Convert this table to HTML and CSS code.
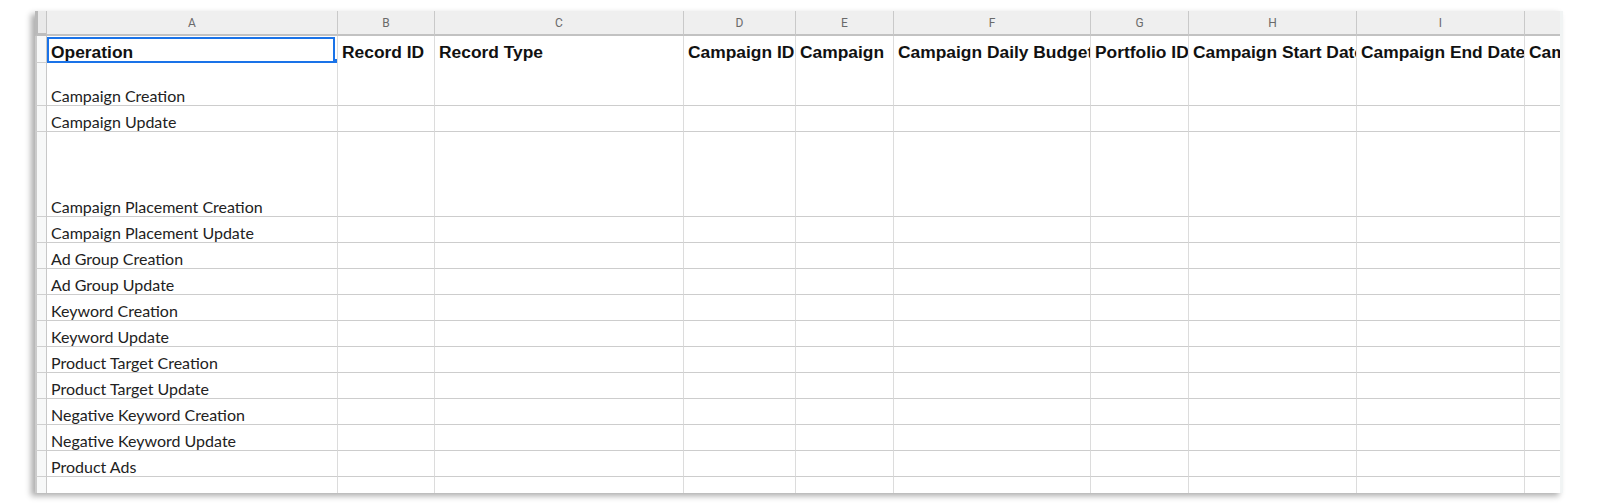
FILE: index.html
```html
<!DOCTYPE html>
<html>
<head>
<meta charset="utf-8">
<link rel="stylesheet" href="styles.css">
</head>
<body>
<div class="page">
  <div class="sheet">
    <div class="row r-head">
      <div class="corner"></div>
      <div class="colh">A</div><div class="colh">B</div><div class="colh">C</div><div class="colh">D</div><div class="colh">E</div><div class="colh">F</div><div class="colh">G</div><div class="colh">H</div><div class="colh">I</div><div class="colh last"></div>
    </div>
    <div class="row r-first">
      <div class="rh"></div>
      <div class="c b sel">Operation</div><div class="c b">Record ID</div><div class="c b">Record Type</div><div class="c b">Campaign ID</div><div class="c b">Campaign</div><div class="c b">Campaign Daily Budget</div><div class="c b">Portfolio ID</div><div class="c b">Campaign Start Date</div><div class="c b">Campaign End Date</div><div class="c b last">Campaign Targeting Type</div>
    </div>
    <div class="row">
      <div class="rh"></div>
      <div class="c t">Campaign Creation</div><div class="c"></div><div class="c"></div><div class="c"></div><div class="c"></div><div class="c"></div><div class="c"></div><div class="c"></div><div class="c"></div><div class="c last"></div>
    </div>
    <div class="row">
      <div class="rh"></div>
      <div class="c t">Campaign Update</div><div class="c"></div><div class="c"></div><div class="c"></div><div class="c"></div><div class="c"></div><div class="c"></div><div class="c"></div><div class="c"></div><div class="c last"></div>
    </div>
    <div class="row">
      <div class="rh"></div>
      <div class="c t">Campaign Placement Creation</div><div class="c"></div><div class="c"></div><div class="c"></div><div class="c"></div><div class="c"></div><div class="c"></div><div class="c"></div><div class="c"></div><div class="c last"></div>
    </div>
    <div class="row">
      <div class="rh"></div>
      <div class="c t">Campaign Placement Update</div><div class="c"></div><div class="c"></div><div class="c"></div><div class="c"></div><div class="c"></div><div class="c"></div><div class="c"></div><div class="c"></div><div class="c last"></div>
    </div>
    <div class="row">
      <div class="rh"></div>
      <div class="c t">Ad Group Creation</div><div class="c"></div><div class="c"></div><div class="c"></div><div class="c"></div><div class="c"></div><div class="c"></div><div class="c"></div><div class="c"></div><div class="c last"></div>
    </div>
    <div class="row">
      <div class="rh"></div>
      <div class="c t">Ad Group Update</div><div class="c"></div><div class="c"></div><div class="c"></div><div class="c"></div><div class="c"></div><div class="c"></div><div class="c"></div><div class="c"></div><div class="c last"></div>
    </div>
    <div class="row">
      <div class="rh"></div>
      <div class="c t">Keyword Creation</div><div class="c"></div><div class="c"></div><div class="c"></div><div class="c"></div><div class="c"></div><div class="c"></div><div class="c"></div><div class="c"></div><div class="c last"></div>
    </div>
    <div class="row">
      <div class="rh"></div>
      <div class="c t">Keyword Update</div><div class="c"></div><div class="c"></div><div class="c"></div><div class="c"></div><div class="c"></div><div class="c"></div><div class="c"></div><div class="c"></div><div class="c last"></div>
    </div>
    <div class="row">
      <div class="rh"></div>
      <div class="c t">Product Target Creation</div><div class="c"></div><div class="c"></div><div class="c"></div><div class="c"></div><div class="c"></div><div class="c"></div><div class="c"></div><div class="c"></div><div class="c last"></div>
    </div>
    <div class="row">
      <div class="rh"></div>
      <div class="c t">Product Target Update</div><div class="c"></div><div class="c"></div><div class="c"></div><div class="c"></div><div class="c"></div><div class="c"></div><div class="c"></div><div class="c"></div><div class="c last"></div>
    </div>
    <div class="row">
      <div class="rh"></div>
      <div class="c t">Negative Keyword Creation</div><div class="c"></div><div class="c"></div><div class="c"></div><div class="c"></div><div class="c"></div><div class="c"></div><div class="c"></div><div class="c"></div><div class="c last"></div>
    </div>
    <div class="row">
      <div class="rh"></div>
      <div class="c t">Negative Keyword Update</div><div class="c"></div><div class="c"></div><div class="c"></div><div class="c"></div><div class="c"></div><div class="c"></div><div class="c"></div><div class="c"></div><div class="c last"></div>
    </div>
    <div class="row">
      <div class="rh"></div>
      <div class="c t">Product Ads</div><div class="c"></div><div class="c"></div><div class="c"></div><div class="c"></div><div class="c"></div><div class="c"></div><div class="c"></div><div class="c"></div><div class="c last"></div>
    </div>
    <div class="row r-end">
      <div class="rh"></div>
      <div class="c"></div><div class="c"></div><div class="c"></div><div class="c"></div><div class="c"></div><div class="c"></div><div class="c"></div><div class="c"></div><div class="c"></div><div class="c last"></div>
    </div>
  </div>
</div>
</body>
</html>
```
FILE: styles.css
```css
* { box-sizing: border-box; }
html, body { margin: 0; padding: 0; background: #ffffff; }
.page {
  padding: 11px 0 0 35px;
  height: 504px;
  overflow: hidden;
}
.sheet {
  display: grid;
  width: max-content;
  grid-template-columns: 12px 291px 97px 249px 112px 98px 197px 98px 168px 168px 35px;
  grid-template-rows: 25px 27px 43px 26px 85px repeat(10, 26px) 16px;
  background: #ffffff;
  border-right: 3px solid #f1f4f4;
  box-shadow: -4px 3px 6px rgba(0, 0, 0, 0.32);
}
.row { display: contents; }

.corner {
  background: #e9e9e9;
  border-left: 3px solid #b9b9b9;
  border-right: 1px solid #c4c4c4;
  border-bottom: 3px solid #bdbdbd;
}
.colh {
  background: #efefef;
  border-right: 1px solid #c9c9c9;
  border-bottom: 2px solid #c2c2c2;
  font-family: Roboto, "Liberation Sans", sans-serif;
  font-size: 12px;
  color: #6a6a6a;
  display: flex;
  align-items: center;
  justify-content: center;
  padding-top: 1px;
}
.colh.last { border-right: none; }

.rh {
  background: #f7f8f8;
  border-left: 2px solid #cbcbcb;
  border-right: 1px solid #c8c8c8;
  border-bottom: 1px solid #cfcfcf;
}

.c {
  border-right: 1px solid #dcdcdc;
  border-bottom: 1px solid #cdcdcd;
  display: flex;
  align-items: flex-end;
  padding: 0 0 0 4px;
  white-space: nowrap;
  overflow: hidden;
  line-height: 21px;
}
.c.last { border-right: none; }
.r-first .c { border-bottom: none; }
.r-end .c, .r-end .rh { border-bottom: none; }

.b {
  font-family: "Liberation Sans", Arial, sans-serif;
  font-weight: bold;
  font-size: 17.4px;
  color: #111111;
}
.t {
  font-family: Lato, "Liberation Sans", sans-serif;
  font-size: 16px;
  line-height: 19px;
  color: #222222;
}

.sel { position: relative; overflow: visible; }
.sel::after {
  content: "";
  position: absolute;
  left: 0;
  top: 1px;
  right: 2px;
  bottom: 0;
  border: 2px solid #1a73e8;
}
.sel::before {
  content: "";
  position: absolute;
  right: 0;
  bottom: 0;
  width: 4px;
  height: 4px;
  background: #1a73e8;
  z-index: 2;
}
```
